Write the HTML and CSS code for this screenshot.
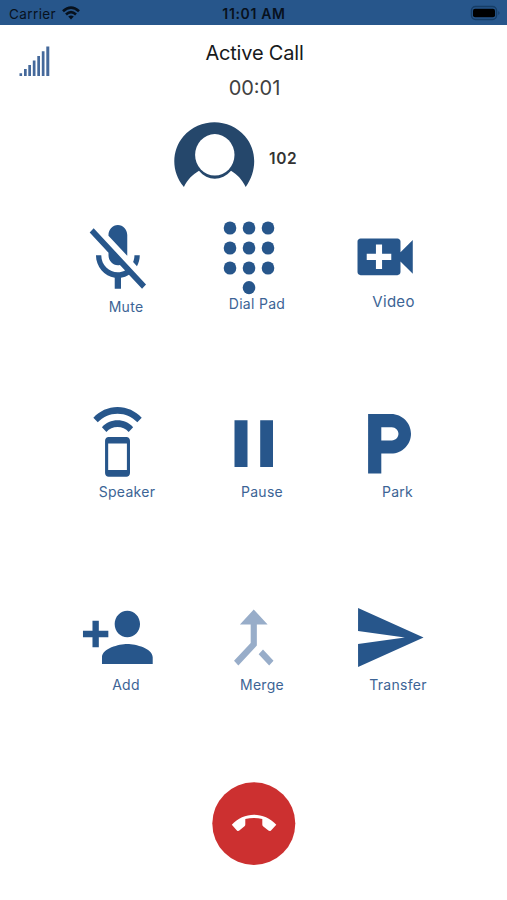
FILE: index.html
```html
<!DOCTYPE html>
<html lang="en">
<head>
<meta charset="utf-8">
<title>Active Call</title>
<link rel="stylesheet" href="styles.css">
</head>
<body>
<header class="status">
  <div class="carrier"><span>Carrier</span>
    <svg width="20" height="16" viewBox="61 5 20 16" fill="none" stroke="#07111d" stroke-width="2.7"><path d="M63 11.2Q71 4 79 11.2M66 14.4Q71 9.9 76 14.4"/><path d="M68.2 16.6Q71 14.2 73.8 16.6L71 19.6Z" fill="#07111d" stroke="none"/></svg>
  </div>
  <time class="clock">11:01 AM</time>
  <svg class="battery" width="32" height="16" viewBox="470 5 32 16"><rect x="471.5" y="6.5" width="25" height="13" rx="4" fill="none" stroke="#163d66" stroke-width="1.5"/><rect x="473" y="8.7" width="22" height="8.6" rx="2" fill="#000"/><path d="M498.3 11q2.5 2 0 4z" fill="#163d66"/></svg>
</header>
<main>
  <section class="heading">
    <svg class="signal" width="34" height="34" viewBox="18 44 34 34" fill="#45699b"><path d="M19.5 73.3h2.6V76h-2.6zM24 69h2.7v7H24zM28.3 65H31v11h-2.7zM32.8 60.5h2.7V76h-2.7zM37.3 56H40v20h-2.7zM41.8 51.3h2.7V76h-2.7zM46.3 46.5h3V76h-3z"/></svg>
    <div class="titles"><h1>Active Call</h1><p>00:01</p></div>
  </section>
  <section class="caller">
    <svg width="82" height="70" viewBox="174 120 82 70"><path d="M183.9 187C170.5 171 171.8 150 183.5 136.2C199.5 117.5 229.5 117.5 245 136.2C257 150 257.3 171 245.7 187C242 179.5 237 174.3 231 170.8C222 181.3 207.5 181.3 199 170.8C193 174.3 187.5 179.5 183.9 187Z" fill="#25476b"/><ellipse cx="214.8" cy="154.8" rx="19.7" ry="20.7" fill="#fff"/></svg>
    <strong>102</strong>
  </section>
  <section class="row first">
    <div class="action"><svg viewBox="58 215 136 77"><path transform="translate(80.3 218.3) scale(3.13 3.35)" d="M19 11h-1.7c0 .74-.16 1.43-.43 2.05l1.23 1.23c.56-.98.9-2.09.9-3.28zm-4.02.17c0-.06.02-.11.02-.17V5c0-1.66-1.34-3-3-3S9 3.34 9 5v.18l5.98 5.99zM4.27 3L3 4.27l6.01 6.01V11c0 1.66 1.33 3 2.99 3 .22 0 .44-.03.65-.08l1.66 1.66c-.71.33-1.5.52-2.31.52-2.76 0-5.3-2.1-5.3-5.1H5c0 3.41 2.72 6.23 6 6.72V21h2v-3.28c.91-.13 1.77-.45 2.54-.9L19.73 21 21 19.73 4.27 3z"/></svg><span class="drop">Mute</span></div>
    <div class="action"><svg viewBox="194 215 136 77"><ellipse cx="230" cy="228" rx="6.3" ry="6.6"/><ellipse cx="249" cy="228" rx="6.3" ry="6.6"/><ellipse cx="268" cy="228" rx="6.3" ry="6.6"/><ellipse cx="230" cy="248" rx="6.3" ry="6.6"/><ellipse cx="249" cy="248" rx="6.3" ry="6.6"/><ellipse cx="268" cy="248" rx="6.3" ry="6.6"/><ellipse cx="230" cy="268" rx="6.3" ry="6.6"/><ellipse cx="249" cy="268" rx="6.3" ry="6.6"/><ellipse cx="268" cy="268" rx="6.3" ry="6.6"/><ellipse cx="249" cy="287.7" rx="6.3" ry="6.6"/></svg><span class="near">Dial Pad</span></div>
    <div class="action"><svg viewBox="330 215 136 77"><path transform="translate(348.3 220.1) scale(3.07 3.06)" d="M17 10.5V7c0-.55-.45-1-1-1H4c-.55 0-1 .45-1 1v10c0 .55.45 1 1 1h12c.55 0 1-.45 1-1v-3.5l4 4v-11l-4 4zM14 13h-3v3H9v-3H6v-2h3V8h2v3h3v2z"/></svg><span class="video">Video</span></div>
  </section>
  <section class="row second">
    <div class="action"><svg viewBox="58 400 136 80"><path transform="translate(80.1 403.7) scale(3.12 3.32)" d="M7 7.07L8.43 8.5c.91-.91 2.18-1.48 3.57-1.48s2.66.57 3.57 1.48L17 7.07C15.72 5.79 13.95 5 12 5s-3.72.79-5 2.07zM12 1C8.98 1 6.24 2.23 4.25 4.21l1.41 1.41C7.28 4 9.53 3 12 3s4.72 1 6.34 2.62l1.41-1.41C17.76 2.23 15.02 1 12 1zm2.86 9.01L9.14 10C8.51 10 8 10.51 8 11.14v9.71c0 .63.51 1.14 1.14 1.14h5.71c.63 0 1.14-.51 1.14-1.14v-9.71c.01-.63-.5-1.13-1.13-1.13zM15 20H9v-8h6v8z"/></svg><span class="speaker">Speaker</span></div>
    <div class="action"><svg viewBox="194 400 136 80"><path d="M234.5 420.3h13V467h-13zM260.2 420.3h12.8V467h-12.8z"/></svg><span>Pause</span></div>
    <div class="action"><svg viewBox="330 400 136 80"><path transform="translate(348.3 404.1) scale(3.3)" d="M13 3H6v18h4v-6h3c3.31 0 6-2.69 6-6s-2.69-6-6-6zm.2 8H10V7h3.2c1.1 0 2 .9 2 2s-.9 2-2 2z"/></svg><span class="park">Park</span></div>
  </section>
  <section class="row third">
    <div class="action"><svg viewBox="58 600 136 73"><path transform="translate(79.8 597.4) scale(3.17 3.33)" d="M15 12c2.21 0 4-1.79 4-4s-1.79-4-4-4-4 1.79-4 4 1.79 4 4 4zm-9-2V7H4v3H1v2h3v3h2v-3h3v-2H6zm9 4c-2.67 0-8 1.34-8 4v2h16v-2c0-2.66-5.33-4-8-4z"/></svg><span>Add</span></div>
    <div class="action"><svg class="disabled" viewBox="194 600 136 73"><path transform="translate(216.8 597.9) scale(3.08 3.31)" d="M17 20.41L18.41 19 15 15.59 13.59 17 17 20.41zM7.5 8H11v5.59L5.59 19 7 20.41l6-6V8h3.5L12 3.5 7.5 8z"/></svg><span>Merge</span></div>
    <div class="action"><svg viewBox="330 600 136 73"><path transform="translate(351.8 598.1) scale(3.12 3.28)" d="M2.01 21L23 12 2.01 3 2 10l15 2-15 2z"/></svg><span>Transfer</span></div>
  </section>
  <button class="hangup" aria-label="End call"><svg width="84" height="84" viewBox="212 782 84 84"><ellipse cx="253.8" cy="823.6" rx="41.5" ry="41.3" fill="#cc3030"/><path d="M231.8 824.8C243.5 811.4 264.5 811.4 276.3 824.8L271 830.4Q269.8 831.5 268.4 830.6L263 826.3Q262.3 825.6 262.3 824.5V819Q253.8 816.8 245.3 819V824.5Q245.3 825.6 244.5 826.3L239.3 830.6Q238 831.5 236.9 830.4Z" fill="#fff"/></svg></button>
</main>
</body>
</html>
```
FILE: styles.css
```css
* { box-sizing: border-box; }
body { margin: 0; height: 900px; background: #fff; color: #17191c; font-family: Inter, "Liberation Sans", sans-serif; overflow: hidden; }
svg { display: block; flex: none; }
h1, p { margin: 0; font-weight: 400; }
.status { height: 25px; display: grid; grid-template-columns: 1fr auto 1fr; align-items: center; padding: 2px 5px 0 9px; background: #27568b; color: #07111d; font-size: 13.5px; }
.carrier { display: flex; align-items: center; gap: 5px; letter-spacing: .4px; }
.carrier svg { margin-top: -2px; }
.clock { font-weight: 600; font-size: 14px; letter-spacing: .65px; margin-right: 3px; }
.battery { justify-self: end; margin-top: -2px; }
.heading { height: 95px; display: grid; grid-template-columns: 34px 1fr 34px; padding: 11px 16px 0 18px; }
.signal { margin-top: 8px; }
.titles { text-align: center; }
.titles h1 { font-size: 20px; line-height: 34px; letter-spacing: -.2px; }
.titles p { font-size: 20px; line-height: 37px; color: #414141; letter-spacing: 0; }
.caller { height: 95px; display: flex; gap: 13px; padding-left: 174px; }
.caller strong { margin-top: 29px; height: 20px; line-height: 20px; font-size: 15.5px; font-weight: 600; color: #333; letter-spacing: .6px; }
.row { display: grid; grid-template-columns: repeat(3, 136px); padding-left: 58px; }
.first { height: 185px; }
.second { height: 200px; }
.third { height: 182px; }
.action { display: flex; flex-direction: column; }
.action svg { width: 136px; fill: #27568b; overflow: visible; }
.first svg { height: 77px; }
.second svg { height: 80px; }
.third svg { height: 73px; }
.action .disabled { fill: #98adc9; }
.action span { text-align: center; margin-top: 2px; line-height: 20px; font-size: 14px; letter-spacing: .3px; color: #3c6495; }
.action .drop { margin-top: 5px; }
.action .near { padding-right: 10px; }
.action .video { margin-top: 0; padding-right: 9px; font-size: 15px; }
.action .speaker { padding-left: 2px; }
.action .park { padding-right: 1px; }
.hangup { display: block; margin-left: 212px; padding: 0; border: 0; background: none; }
```
